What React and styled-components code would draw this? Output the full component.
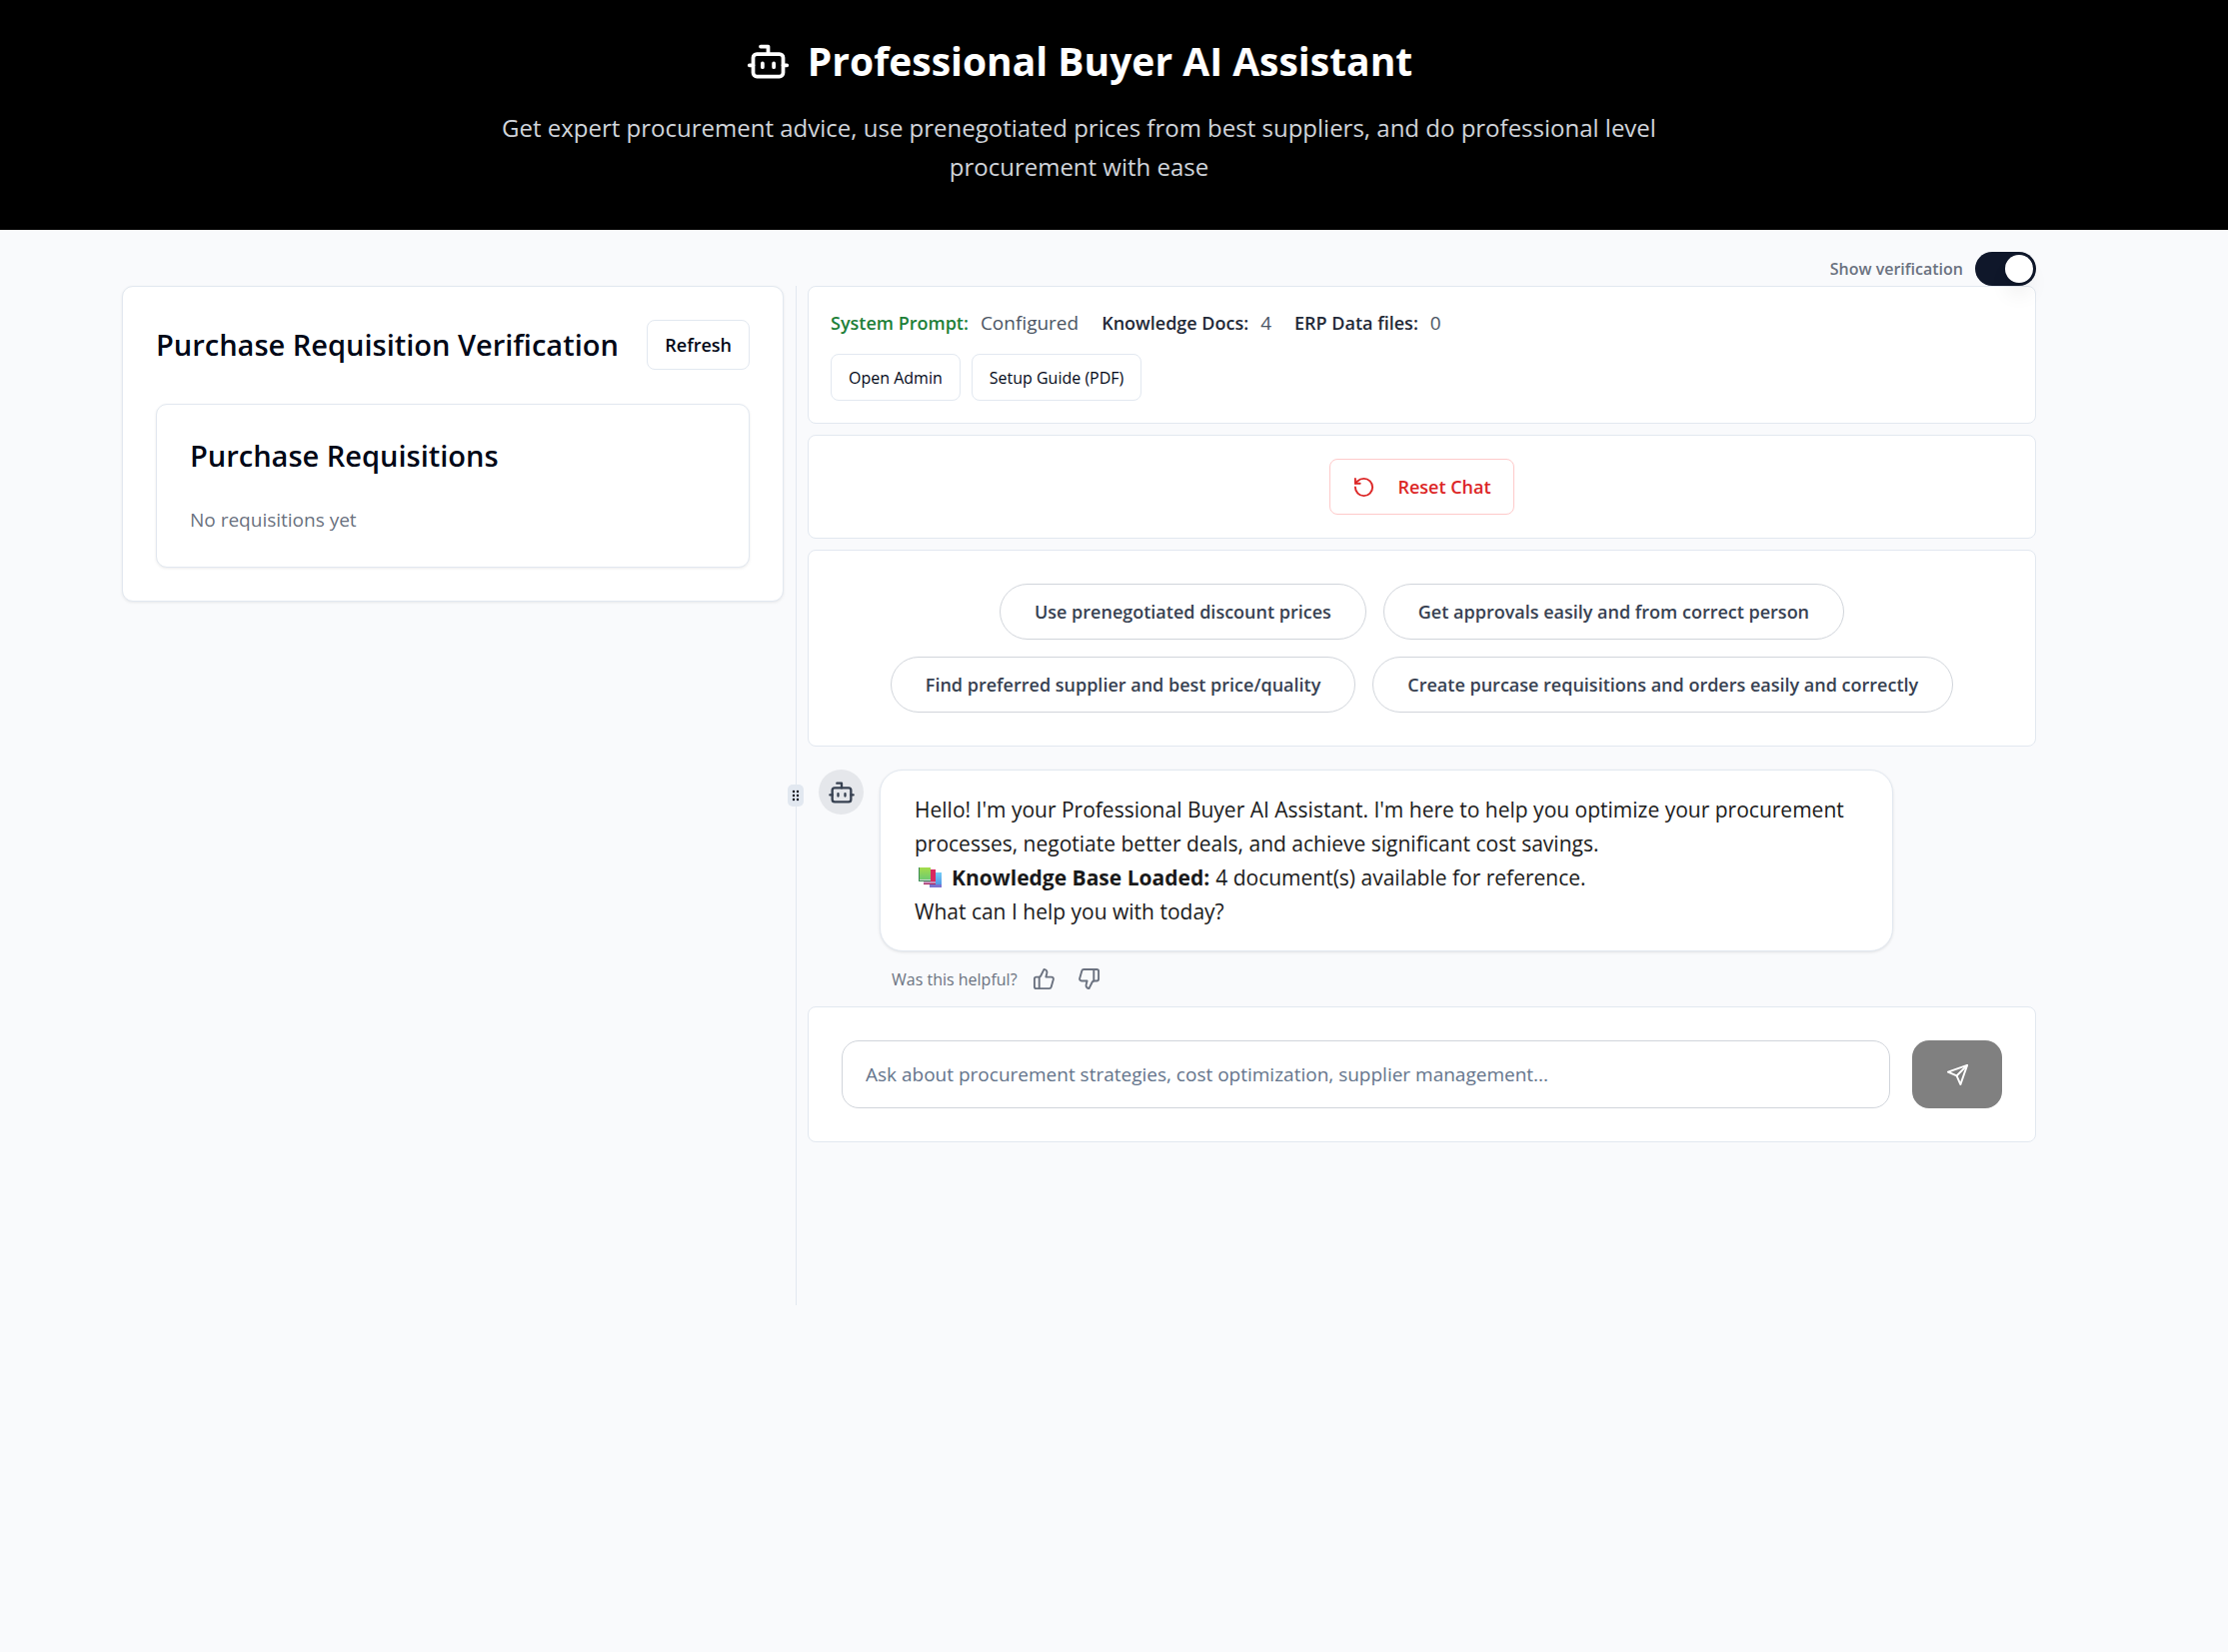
import React, { useState } from "react";
import styled, { createGlobalStyle } from "styled-components";

const Global = createGlobalStyle`
  *, *::before, *::after { box-sizing: border-box; }
  body { margin: 0; background: #f9fafc; color: #020817; font-family: "Open Sans", "Noto Sans", sans-serif; font-size: 19px; line-height: 28px; }
  h1, h2, h3, p { margin: 0; }
  button, input { font-family: inherit; }
  svg { display: block; flex: none; }
`;

const Header = styled.header`
  background: #000;
  padding: 34px 192px 44px 122px;
  display: flex;
  flex-direction: column;
  align-items: center;
  gap: 20px;
  text-align: center;
`;
const Title = styled.h1`
  display: flex;
  align-items: center;
  gap: 17px;
  color: #fff;
  font-size: 39px;
  line-height: 54px;
  font-weight: 700;
`;
const Tagline = styled.p`
  max-width: 1190px;
  color: #d1d5db;
  font-size: 24px;
  line-height: 39px;
`;
const Main = styled.main`
  padding: 22px 192px 0 122px;
`;
const ToggleBar = styled.label`
  display: flex;
  justify-content: flex-end;
  align-items: center;
  gap: 12px;
  color: #6b7280;
  font-size: 16px;
  font-weight: 600;
  position: relative;
  z-index: 1;
`;
const Switch = styled.input`
  appearance: none;
  margin: 0;
  width: 61px;
  height: 34px;
  padding: 3px;
  border-radius: 17px;
  background: #0f172a;
  display: flex;
  justify-content: ${(p) => (p.checked ? "flex-end" : "flex-start")};
  cursor: pointer;
  &::before {
    content: "";
    width: 28px;
    height: 28px;
    border-radius: 50%;
    background: #fff;
    box-shadow: 0 14px 21px -4px rgba(0, 0, 0, 0.1), 0 6px 8px -6px rgba(0, 0, 0, 0.1);
  }
`;
const Panels = styled.div`
  display: grid;
  grid-template-columns: 662px 24px minmax(0, 1fr);
`;
const Card = styled.section`
  align-self: start;
  background: #fff;
  border: 1px solid #e2e8f0;
  border-radius: 11px;
  padding: 33px;
  box-shadow: 0 1px 3px rgba(0, 0, 0, 0.08);
`;
const CardHead = styled.div`
  display: flex;
  justify-content: space-between;
  align-items: center;
  margin-bottom: 34px;
`;
const CardTitle = styled.h2`
  font-size: 29px;
  line-height: 36px;
  font-weight: 600;
  white-space: nowrap;
`;
const Empty = styled.p`
  margin-top: 32px;
  color: #6b7280;
`;
const Button = styled.button`
  height: ${(p) => p.$height}px;
  padding: 0 17px;
  border: 1px solid #e2e8f0;
  border-radius: 8px;
  background: #fff;
  color: #020817;
  font-size: ${(p) => (p.$small ? 16 : 18)}px;
  font-weight: ${(p) => (p.$small ? 400 : 600)};
  white-space: nowrap;
  cursor: pointer;
`;
const ResetButton = styled(Button)`
  display: flex;
  align-items: center;
  gap: 22px;
  padding: 0 22px;
  border-color: #fecaca;
  color: #dc2626;
`;
const Divider = styled.div`
  justify-self: center;
  width: 1px;
  height: 1020px;
  background: #e2e8f0;
  display: flex;
  align-items: center;
  justify-content: center;
`;
const Grip = styled.div`
  flex: none;
  width: 16px;
  height: 22px;
  border-radius: 5px;
  background: #e2e8f0;
  display: grid;
  place-items: center;
`;
const Chat = styled.div`
  display: flex;
  flex-direction: column;
`;
const Panel = styled.section`
  background: #fff;
  border: 1px solid #e2e8f0;
  border-radius: 8px;
  padding: ${(p) => p.$pad}px;
  margin-bottom: ${(p) => (p.$last ? 0 : 11)}px;
`;
const StatusRow = styled.div`
  display: flex;
  gap: 23px;
`;
const Status = styled.div`
  display: flex;
  align-items: baseline;
  gap: 12px;
  color: #4b5563;
`;
const StatusName = styled.span`
  color: ${(p) => (p.$ok ? "#1d8038" : "#1f2937")};
  font-size: 18px;
  font-weight: 600;
`;
const Row = styled.div`
  display: flex;
  flex-wrap: wrap;
  justify-content: ${(p) => (p.$center ? "center" : "flex-start")};
  gap: ${(p) => p.$gap}px;
`;
const Actions = styled(Row)`
  margin-top: 17px;
`;
const Pill = styled.button`
  height: 56px;
  padding: 0 34px;
  border: 1px solid #d1d5db;
  border-radius: 28px;
  background: #fff;
  color: #374151;
  font-size: 18px;
  font-weight: 600;
  cursor: pointer;
`;
const Message = styled.article`
  display: flex;
  align-items: flex-start;
  gap: 16px;
  padding: 12px 11px 0;
`;
const Avatar = styled.div`
  flex: none;
  width: 45px;
  height: 45px;
  border-radius: 50%;
  background: #e5e7eb;
  color: #374151;
  display: grid;
  place-items: center;
`;
const Bubble = styled.div`
  width: 84%;
  padding: 22px 34px;
  border: 1px solid #e2e8f0;
  border-radius: 23px;
  background: #fff;
  color: #1a1a1a;
  font-size: 21px;
  line-height: 34px;
  box-shadow: 0 1px 3px rgba(0, 0, 0, 0.1);
`;
const KnowledgeLine = styled.p`
  display: flex;
  align-items: center;
  gap: 6px;
`;
const Feedback = styled.div`
  display: flex;
  align-items: center;
  gap: 10px;
  padding: 11px 84px;
  color: #6b7280;
  font-size: 16px;
`;
const Votes = styled.div`
  display: flex;
  gap: 12px;
`;
const IconButton = styled.button`
  border: 0;
  padding: 5px;
  background: none;
  color: #6b7280;
  cursor: pointer;
`;
const Composer = styled.form`
  display: flex;
  gap: 22px;
`;
const Field = styled.input`
  flex: 1;
  min-width: 0;
  height: 68px;
  padding: 0 23px;
  border: 1px solid #d1d5db;
  border-radius: 17px;
  background: #fff;
  font-size: 19px;
  &::placeholder { color: #64748b; opacity: 1; }
`;
const Send = styled.button`
  width: 90px;
  height: 68px;
  border: 0;
  border-radius: 17px;
  background: #808080;
  color: #fff;
  display: grid;
  place-items: center;
`;

const Icon = ({ size, children }) => (
  <svg width={size} height={size} viewBox="0 0 24 24" fill="none" stroke="currentColor" strokeWidth="2" strokeLinecap="round" strokeLinejoin="round" aria-hidden="true">
    {children}
  </svg>
);
const Bot = ({ size }) => (
  <Icon size={size}>
    <path d="M12 8V4H8" />
    <rect width="16" height="12" x="4" y="8" rx="2" />
    <path d="M2 14h2M20 14h2M15 13v2M9 13v2" />
  </Icon>
);
const Books = () => (
  <svg width="31" height="28" viewBox="0 0 31 28" aria-hidden="true">
    <defs>
      <linearGradient id="green" x1="0" y1="0" x2="0" y2="1">
        <stop offset="0" stopColor="#a5dc4a" />
        <stop offset="1" stopColor="#6fcb70" />
      </linearGradient>
      <linearGradient id="blue" x1="0" y1="0" x2="0" y2="1">
        <stop offset="0" stopColor="#74cdf6" />
        <stop offset="1" stopColor="#4f95e6" />
      </linearGradient>
    </defs>
    <path d="M15 9h12v13H15z" fill="url(#blue)" />
    <path d="M15 21h12v3H15z" fill="#7b72cf" />
    <path d="M10 6h11v13H10z" fill="#d8285f" />
    <path d="M9 18h12v3H9z" fill="#c58fb8" />
    <path d="M9 20h12v1H9z" fill="#a8265f" />
    <path d="M4 4h12v12H4z" fill="url(#green)" />
    <path d="M4 4h1v13H4z" fill="#3d8b50" />
    <path d="M5 16h11v1H5z" fill="#c9d6cf" />
    <path d="M4 17h12v1H4z" fill="#3f8f5b" />
  </svg>
);

const suggestions = [
  "Use prenegotiated discount prices",
  "Get approvals easily and from correct person",
  "Find preferred supplier and best price/quality",
  "Create purcase requisitions and orders easily and correctly",
];

export default function App() {
  const [verify, setVerify] = useState(true);
  return (
    <>
      <Global />
      <Header>
        <Title><Bot size={45} />Professional Buyer AI Assistant</Title>
        <Tagline>
          Get expert procurement advice, use prenegotiated prices from best suppliers, and do professional level procurement with ease
        </Tagline>
      </Header>
      <Main>
        <ToggleBar>
          Show verification
          <Switch type="checkbox" role="switch" checked={verify} onChange={(e) => setVerify(e.target.checked)} />
        </ToggleBar>
        <Panels>
          <Card>
            <CardHead>
              <CardTitle>Purchase Requisition Verification</CardTitle>
              <Button $height={50}>Refresh</Button>
            </CardHead>
            <Card as="div">
              <CardTitle as="h3">Purchase Requisitions</CardTitle>
              <Empty>No requisitions yet</Empty>
            </Card>
          </Card>
          <Divider>
            <Grip>
              <svg width="8" height="12" viewBox="0 0 8 12" fill="#020817" aria-hidden="true">
                {[2, 6].map((x) => [2, 6, 10].map((y) => <circle key={`${x}-${y}`} cx={x} cy={y} r="1.2" />))}
              </svg>
            </Grip>
          </Divider>
          <Chat>
            <Panel $pad={22}>
              <StatusRow>
                <Status><StatusName $ok>System Prompt:</StatusName>Configured</Status>
                <Status><StatusName>Knowledge Docs:</StatusName>4</Status>
                <Status><StatusName>ERP Data files:</StatusName>0</Status>
              </StatusRow>
              <Actions $gap={11}>
                <Button $height={47} $small>Open Admin</Button>
                <Button $height={47} $small>Setup Guide (PDF)</Button>
              </Actions>
            </Panel>
            <Panel $pad={23}>
              <Row $center $gap={17}>
                <ResetButton $height={56}>
                  <Icon size={23}>
                    <path d="M3 12a9 9 0 1 0 9-9 9.75 9.75 0 0 0-6.74 2.74L3 8" />
                    <path d="M3 3v5h5" />
                  </Icon>
                  Reset Chat
                </ResetButton>
              </Row>
            </Panel>
            <Panel $pad={33}>
              <Row $center $gap={17}>
                {suggestions.map((text) => <Pill key={text}>{text}</Pill>)}
              </Row>
            </Panel>
            <Message>
              <Avatar><Bot size={28} /></Avatar>
              <Bubble>
                <p>Hello! I'm your Professional Buyer AI Assistant. I'm here to help you optimize your procurement processes, negotiate better deals, and achieve significant cost savings.</p>
                <KnowledgeLine><Books /><strong>Knowledge Base Loaded:</strong> 4 document(s) available for reference.</KnowledgeLine>
                <p>What can I help you with today?</p>
              </Bubble>
            </Message>
            <Feedback>
              Was this helpful?
              <Votes>
                <IconButton aria-label="Helpful">
                  <Icon size={23}>
                    <path d="M7 10v12" />
                    <path d="M15 5.88 14 10h5.83a2 2 0 0 1 1.92 2.56l-2.33 8A2 2 0 0 1 17.5 22H4a2 2 0 0 1-2-2v-8a2 2 0 0 1 2-2h2.76a2 2 0 0 0 1.79-1.11L12 2a3.13 3.13 0 0 1 3 3.88Z" />
                  </Icon>
                </IconButton>
                <IconButton aria-label="Not helpful">
                  <Icon size={23}>
                    <path d="M17 14V2" />
                    <path d="M9 18.12 10 14H4.17a2 2 0 0 1-1.92-2.56l2.33-8A2 2 0 0 1 6.5 2H20a2 2 0 0 1 2 2v8a2 2 0 0 1-2 2h-2.76a2 2 0 0 0-1.79 1.11L12 22a3.13 3.13 0 0 1-3-3.88Z" />
                  </Icon>
                </IconButton>
              </Votes>
            </Feedback>
            <Panel $pad={33} $last>
              <Composer onSubmit={(e) => e.preventDefault()}>
                <Field aria-label="Message" placeholder="Ask about procurement strategies, cost optimization, supplier management..." />
                <Send aria-label="Send">
                  <Icon size={23}>
                    <path d="m22 2-7 20-4-9-9-4Z" />
                    <path d="M22 2 11 13" />
                  </Icon>
                </Send>
              </Composer>
            </Panel>
          </Chat>
        </Panels>
      </Main>
    </>
  );
}
